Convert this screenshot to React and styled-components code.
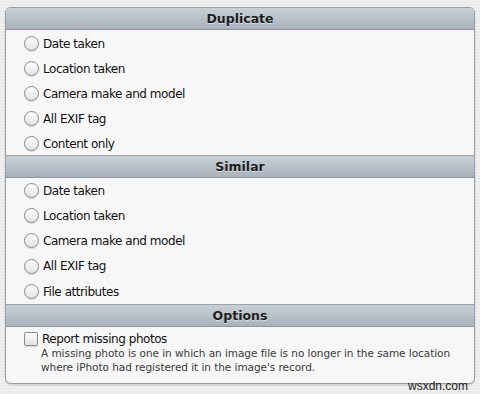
import React from "react";
import styled, { createGlobalStyle } from "styled-components";

const Global = createGlobalStyle`
  html, body {
    margin: 0;
    padding: 0;
  }
  body {
    width: 480px;
    height: 394px;
    overflow: hidden;
    background-color: #ebebeb;
    background-image: repeating-linear-gradient(0deg, rgba(255,255,255,0.35) 0px, rgba(255,255,255,0.35) 1px, transparent 1px, transparent 3px);
    font-family: "DejaVu Sans", "Liberation Sans", sans-serif;
  }
`;

const Page = styled.div`
  position: relative;
  padding: 7px 5px 0 5px;
  height: 394px;
  box-sizing: border-box;
`;

const Panel = styled.div`
  border: 1px solid #9d9d9d;
  border-radius: 6px;
  background: #f7f7f7;
  overflow: hidden;
  box-shadow: 0 1px 2px rgba(0, 0, 0, 0.18);
`;

const Header = styled.div`
  height: 21px;
  line-height: 21px;
  text-align: center;
  font-size: 12.5px;
  font-weight: bold;
  color: #1e1e1e;
  text-shadow: 0 1px 0 rgba(255, 255, 255, 0.5);
  background: linear-gradient(#c8d0d7, #a9b2bb);
  border-top: ${(p) => (p.first ? "none" : "1px solid #9aa2aa")};
  border-bottom: 1px solid #8d959d;
`;

const List = styled.div`
  box-sizing: border-box;
  height: ${(p) => p.h}px;
  padding-top: ${(p) => p.top || 0}px;
`;

const Row = styled.label`
  display: flex;
  align-items: center;
  height: ${(p) => p.h || 25}px;
  padding-left: 18px;
  gap: 4px;
  font-size: 12px;
  letter-spacing: -0.45px;
  color: #111;
`;

const Radio = styled.span`
  width: 13px;
  height: 13px;
  border-radius: 50%;
  border: 1px solid #8a8a8a;
  background: linear-gradient(#ffffff, #e2e2e2);
  box-shadow: 0 1px 1px rgba(0, 0, 0, 0.12);
  flex: none;
`;

const Check = styled.span`
  width: 12px;
  height: 12px;
  border-radius: 2px;
  border: 1px solid #8a8a8a;
  background: linear-gradient(#ffffff, #e2e2e2);
  box-shadow: 0 1px 1px rgba(0, 0, 0, 0.12);
  flex: none;
`;

const Options = styled.div`
  padding: 5px 0 9px 0;
`;

const Desc = styled.div`
  padding-left: 35px;
  font-size: 10.5px;
  line-height: 14px;
  letter-spacing: -0.05px;
  color: #3a3a3a;
`;

const Watermark = styled.div`
  position: absolute;
  right: 12px;
  bottom: 1px;
  font-family: "Liberation Sans", sans-serif;
  font-size: 12px;
  color: #222;
`;

const duplicate = ["Date taken", "Location taken", "Camera make and model", "All EXIF tag", "Content only"];
const similar = ["Date taken", "Location taken", "Camera make and model", "All EXIF tag", "File attributes"];

const App = () => {
  return (
    <Page>
      <Global />
      <Panel>
        <Header first>Duplicate</Header>
        <List h={125} top={1}>
          {duplicate.map((t) => (
            <Row key={t}>
              <Radio />
              {t}
            </Row>
          ))}
        </List>
        <Header>Similar</Header>
        <List h={126}>
          {similar.map((t, i) => (
            <Row key={t} h={i > 1 ? 25.5 : 25}>
              <Radio />
              {t}
            </Row>
          ))}
        </List>
        <Header>Options</Header>
        <Options>
          <Row h={14}>
            <Check />
            Report missing photos
          </Row>
          <Desc>
            A missing photo is one in which an image file is no longer in the same location
            <br />
            where iPhoto had registered it in the image's record.
          </Desc>
        </Options>
      </Panel>
      <Watermark>wsxdn.com</Watermark>
    </Page>
  );
};

export default App;
